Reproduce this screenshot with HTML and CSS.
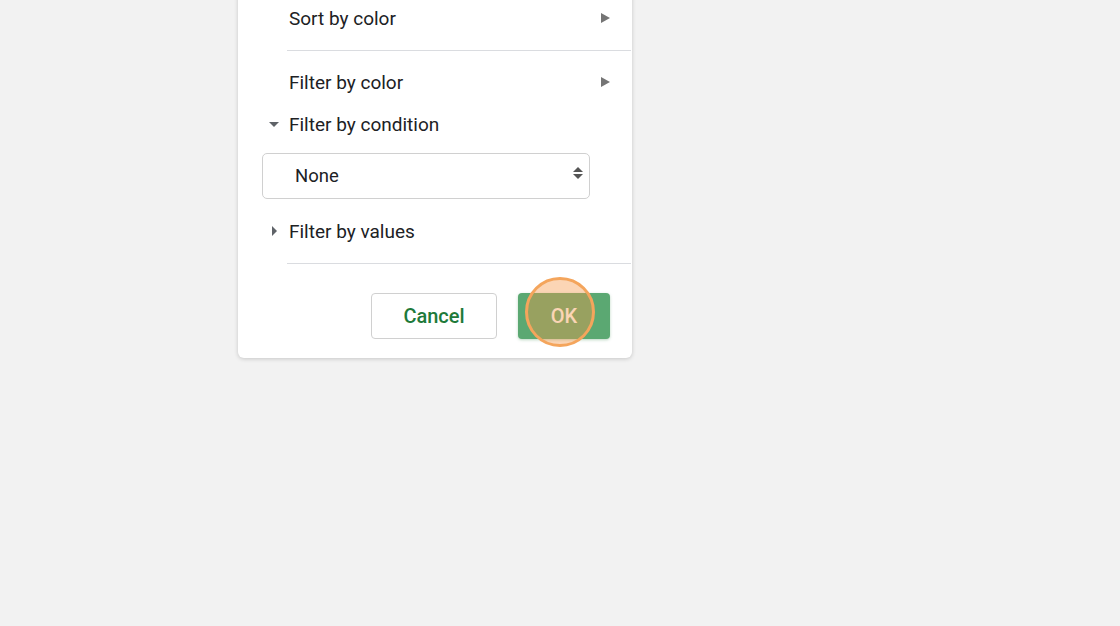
FILE: index.html
```html
<!DOCTYPE html>
<html>
<head>
    <link rel="stylesheet" href="styles.css">
</head>
<body>
    <div class="filter-menu">
        <div class="menu-row">
            <span class="label">Sort by color</span>
            <span class="submenu-arrow"></span>
        </div>
        <div class="separator"></div>
        <div class="menu-row">
            <span class="label">Filter by color</span>
            <span class="submenu-arrow"></span>
        </div>
        <div class="menu-row section">
            <span class="caret caret-down"></span>
            <span class="label">Filter by condition</span>
        </div>
        <div class="select-box">
            <span>None</span>
            <span class="updown">
                <span class="up"></span>
                <span class="down"></span>
            </span>
        </div>
        <div class="menu-row section values-row">
            <span class="caret caret-right"></span>
            <span class="label">Filter by values</span>
        </div>
        <div class="separator"></div>
        <div class="actions">
            <button class="btn-cancel">Cancel</button>
            <button class="btn-ok">OK<span class="click-mark"></span></button>
        </div>
    </div>
</body>
</html>
```

FILE: styles.css
```css
body {
    margin: 0;
    background-color: #f2f2f2;
    font-family: Roboto, "Liberation Sans", Arial, sans-serif;
    height: 626px;
    overflow: hidden;
}

.filter-menu {
    width: 394px;
    margin-left: 238px;
    margin-top: -20px;
    padding-top: 20px;
    padding-bottom: 19px;
    background-color: #fff;
    border-radius: 6px;
    box-shadow: 0 1px 4px rgba(0, 0, 0, 0.18);
}

.menu-row {
    display: flex;
    align-items: center;
    height: 36px;
    padding-left: 51px;
    padding-right: 22px;
    font-size: 19px;
    color: #202124;
}

.menu-row .label {
    flex: 1;
}

.submenu-arrow {
    width: 0;
    height: 0;
    border-top: 5px solid transparent;
    border-bottom: 5px solid transparent;
    border-left: 9px solid #757575;
}

.separator {
    height: 1px;
    margin: 14px 1px 13px 49px;
    background-color: #dadce0;
}

.section {
    position: relative;
    margin-top: 6px;
}

.caret {
    position: absolute;
    width: 0;
    height: 0;
}

.caret-down {
    left: 31px;
    top: 16px;
    border-left: 5px solid transparent;
    border-right: 5px solid transparent;
    border-top: 5px solid #5f6368;
}

.caret-right {
    left: 34px;
    top: 13px;
    border-top: 5px solid transparent;
    border-bottom: 5px solid transparent;
    border-left: 5px solid #5f6368;
}

.select-box {
    display: flex;
    align-items: center;
    justify-content: space-between;
    box-sizing: border-box;
    width: 328px;
    height: 46px;
    margin: 11px 0 0 24px;
    padding: 0 6px 0 32px;
    border: 1px solid #d0d0d0;
    border-radius: 5px;
    font-size: 18.5px;
    color: #202124;
}

.updown {
    display: flex;
    flex-direction: column;
    gap: 2px;
    margin-bottom: 7px;
}

.updown .up {
    width: 0;
    height: 0;
    border-left: 5px solid transparent;
    border-right: 5px solid transparent;
    border-bottom: 5px solid #555;
}

.updown .down {
    width: 0;
    height: 0;
    border-left: 5px solid transparent;
    border-right: 5px solid transparent;
    border-top: 5px solid #555;
}

.values-row {
    margin-top: 14px;
}

.actions {
    display: flex;
    justify-content: flex-end;
    gap: 21px;
    padding-right: 22px;
    margin-top: 29px;
}

.actions button {
    height: 46px;
    border-radius: 4px;
    font-family: Roboto, "Liberation Sans", Arial, sans-serif;
    font-size: 20px;
    font-weight: 500;
    cursor: pointer;
}

.btn-cancel {
    width: 126px;
    background-color: #fff;
    border: 1px solid #d0d0d0;
    color: #1e7a3a;
}

.btn-ok {
    position: relative;
    width: 92px;
    background-color: #5ba872;
    border: none;
    color: #fff;
    box-shadow: 0 1px 3px rgba(60, 140, 80, 0.35);
}

.click-mark {
    position: absolute;
    left: 7px;
    top: -16px;
    width: 64px;
    height: 64px;
    border-radius: 50%;
    border: 3px solid #f4a55c;
    background-color: rgba(245, 150, 70, 0.4);
}
```
